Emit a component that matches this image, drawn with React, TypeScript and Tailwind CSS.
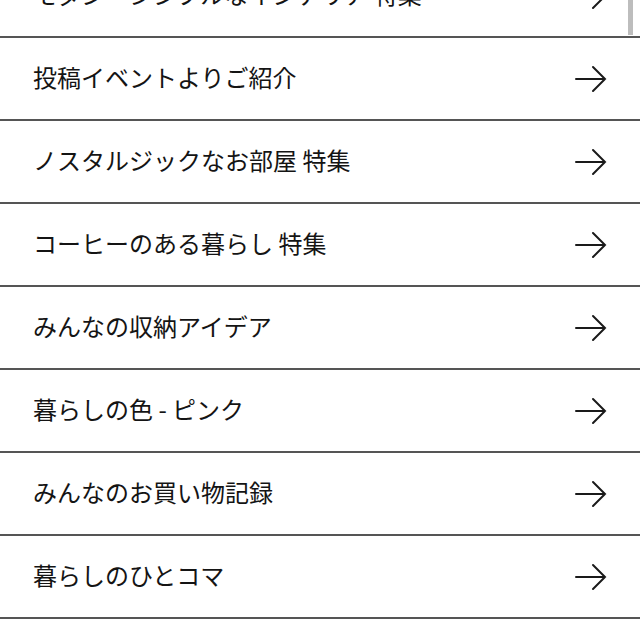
const items = [
  "モダン・シンプルなインテリア 特集",
  "投稿イベントよりご紹介",
  "ノスタルジックなお部屋 特集",
  "コーヒーのある暮らし 特集",
  "みんなの収納アイデア",
  "暮らしの色 - ピンク",
  "みんなのお買い物記録",
  "暮らしのひとコマ",
];

function Arrow() {
  return (
    <svg width="32" height="28" viewBox="0 0 32 28" fill="none" aria-hidden>
      <path d="M1 14H30M18 2L30 14L18 26" stroke="#1a1a1a" strokeWidth="2" strokeLinecap="round" strokeLinejoin="miter" />
    </svg>
  );
}

export default function App() {
  return (
    <div className="relative h-[640px] w-[640px] overflow-hidden bg-white font-['Noto_Sans_CJK_JP',sans-serif]">
      <ul className="-mt-[45px]">
        {items.map((label) => (
          <li key={label} className="flex h-[83px] items-center justify-between border-b-2 border-[#555555] pl-[33px] pr-[33px]">
            <span className="mb-[4px] text-[24px] leading-none whitespace-pre text-[#141414]">{label}</span>
            <Arrow />
          </li>
        ))}
      </ul>
      <div className="absolute left-[628px] top-0 h-[35px] w-[5px] bg-[#bdbdbd]" />
    </div>
  );
}
